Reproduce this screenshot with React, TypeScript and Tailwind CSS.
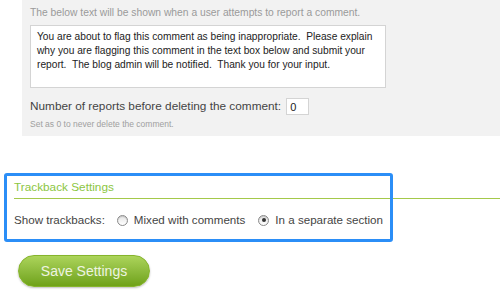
import React from 'react'

function Radio({ checked }: { checked?: boolean }) {
  return (
    <span className="inline-flex h-[11px] w-[11px] items-center justify-center rounded-full border border-[#8a8a8a] bg-gradient-to-b from-[#e4e4e4] to-[#ffffff] shadow-[inset_0_1px_1px_rgba(0,0,0,0.15)]">
      {checked && <span className="h-[4px] w-[4px] rounded-full bg-[#333]" />}
    </span>
  )
}

export default function App() {
  const font = { fontFamily: '"Liberation Sans", Arial, sans-serif' }
  return (
    <div className="relative h-[304px] w-[500px] overflow-hidden bg-white" style={font}>
      <div className="ml-[22px] h-[136px] bg-[#f2f2f2] pl-[8px] pt-[6px]">
        <p className="text-[10.3px] leading-[14px] text-[#9a9a9a]">
          The below text will be shown when a user attempts to report a comment.
        </p>
        <div className="mt-[5px] h-[63px] w-[356px] border border-[#d4d4d4] bg-white px-[6px] pt-[4px] text-[10.2px] leading-[14px] text-[#222]">
          You are about to flag this comment as being inappropriate.&nbsp; Please explain why you are flagging this comment in the text box below and submit your report.&nbsp; The blog admin will be notified.&nbsp; Thank you for your input.
        </div>
        <div className="mt-[10px] flex items-center gap-[5px] text-[11.8px] text-[#444]">
          <span>Number of reports before deleting the comment:</span>
          <span className="flex h-[17px] w-[23px] items-center border border-[#d4d4d4] bg-white pl-[3px] text-[11px] text-[#222]">0</span>
        </div>
        <p className="mt-[2px] text-[8.5px] leading-[12px] text-[#a0a0a0]">Set as 0 to never delete the comment.</p>
      </div>

      <div className="pl-[14px] pt-[44px]">
        <h3 className="text-[11.8px] leading-[14px] text-[#8cc63f]">Trackback Settings</h3>
        <div className="mt-[4px] h-[1px] bg-[#a4c94a]" />
        <div className="mt-[14px] flex items-center text-[11.6px] leading-[14px] text-[#444]">
          <span>Show trackbacks:</span>
          <span className="ml-[12px] flex items-center gap-[6px]">
            <Radio />
            <span>Mixed with comments</span>
          </span>
          <span className="ml-[13px] flex items-center gap-[6px]">
            <Radio checked />
            <span>In a separate section</span>
          </span>
        </div>
        <button
          type="button"
          className="ml-[4px] mt-[28px] flex h-[32px] w-[132px] items-center justify-center rounded-full border border-[#86b42c] bg-gradient-to-b from-[#acd45a] to-[#6fa216] text-[14px] text-[#eef4e0] shadow-[0_1px_2px_rgba(0,0,0,0.25)]"
        >
          Save Settings
        </button>
      </div>

      <div className="absolute left-[4px] top-[173px] h-[69px] w-[389px] rounded-[3px] border-[3px] border-[#2b8ef7]" />
    </div>
  )
}
